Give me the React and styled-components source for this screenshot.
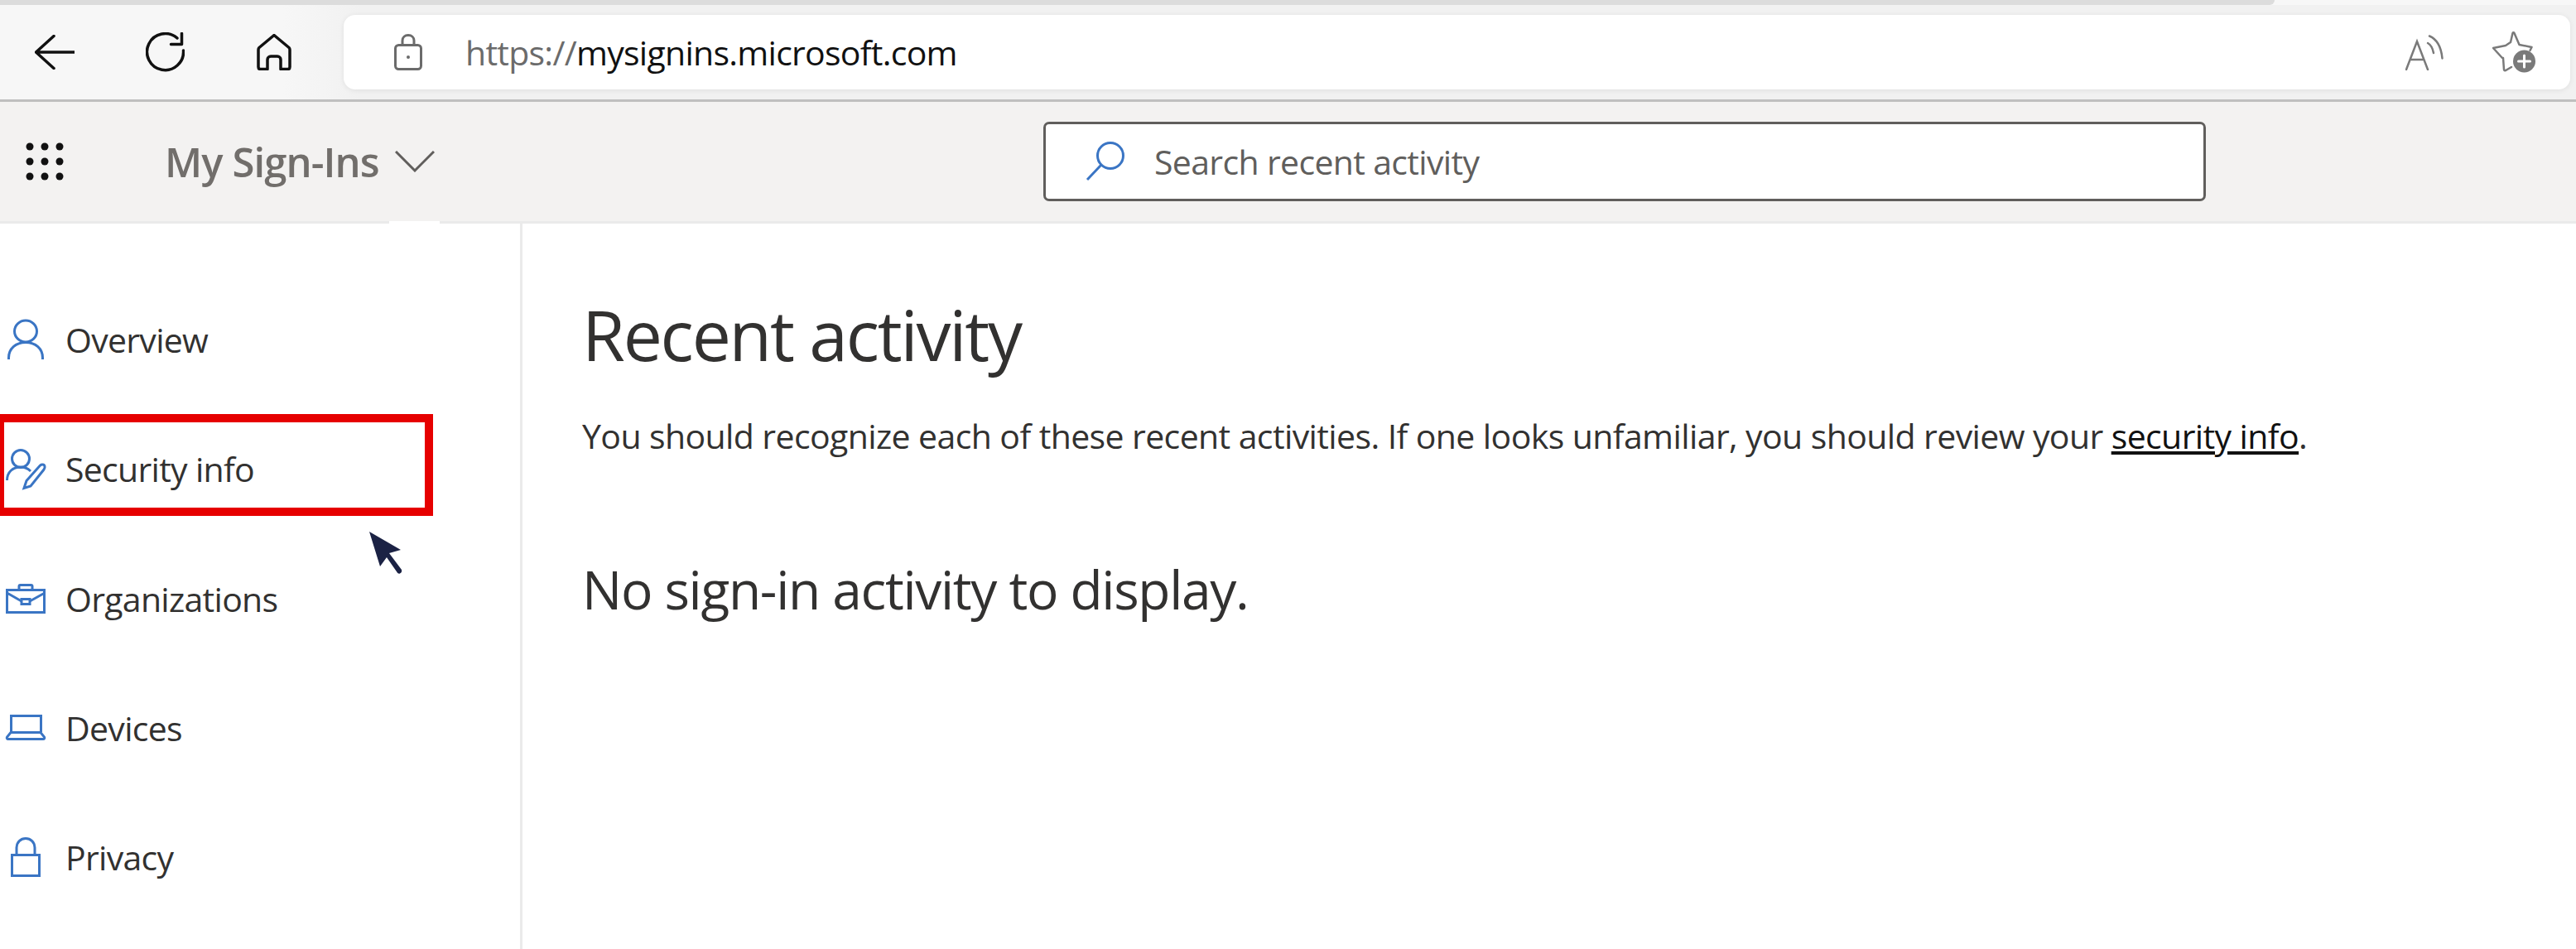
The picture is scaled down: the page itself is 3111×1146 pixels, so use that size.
import styled, { createGlobalStyle } from "styled-components";

const GlobalStyle = createGlobalStyle`
  html, body {
    margin: 0;
    padding: 0;
    background: #fff;
  }
  body {
    font-family: "Open Sans", "Noto Sans", "Liberation Sans", sans-serif;
    color: #323130;
  }
`;

const NAV_ITEMS = [
  { label: "Overview", icon: <PersonIcon /> },
  { label: "Security info", icon: <SecurityIcon /> },
  { label: "Organizations", icon: <BriefcaseIcon /> },
  { label: "Devices", icon: <LaptopIcon /> },
  { label: "Privacy", icon: <PadlockIcon /> },
];

function PersonIcon() {
  return (
    <NavSvg viewBox="0 0 48 48" width="48" height="48">
      <ellipse cx="24" cy="14" rx="13.500" ry="13" />
      <path d="M3.500 48v-2C3.500 35 12 27.500 24 27.500S44.500 35 44.500 46v2" />
    </NavSvg>
  );
}

function SecurityIcon() {
  return (
    <NavSvg viewBox="0 0 48 48" width="48" height="48">
      <circle cx="18" cy="12" r="10.500" />
      <path d="M1.500 38c0-10 7-16 16.500-16 4.500 0 8.500 1.500 12 5" />
      <path d="M25 38.500L41.500 20c1.500-1.500 5-1.500 5.500 1 .4 1.500 0 2.500-1 4L30 45l-8 2.500z" />
    </NavSvg>
  );
}

function BriefcaseIcon() {
  return (
    <NavSvg viewBox="0 0 48 36" width="48" height="36">
      <rect x="1.500" y="7.500" width="45" height="27" />
      <path d="M16 7V3c0-1 .8-1.500 1.500-1.500h13c.8 0 1.500.5 1.500 1.500v4" />
      <path d="M1.500 11L19 21M47 11L29 21" />
      <rect x="19" y="18.500" width="10" height="6" />
    </NavSvg>
  );
}

function LaptopIcon() {
  return (
    <NavSvg viewBox="0 0 48 31" width="48" height="31">
      <path d="M6.500 21V1.500h36V21" />
      <path d="M6 21.500h36l4.500 5.500c.7 1.200 0 2.500-1.500 2.500H3c-1.500 0-2.200-1.300-1.500-2.500z" />
    </NavSvg>
  );
}

function PadlockIcon() {
  return (
    <NavSvg viewBox="0 0 36 48" width="36" height="48">
      <rect x="1.500" y="21.500" width="33" height="25" />
      <path d="M7 21v-8.500C7 6 12 1.500 18 1.500S29 6 29 12.500V21" />
    </NavSvg>
  );
}

export default function App() {
  return (
    <Page>
      <GlobalStyle />
      <TabStrip>
        <TabEdge />
      </TabStrip>
      <Toolbar>
        <ToolButton $width={112}>
          <ToolSvg viewBox="0 0 48 42" width="48" height="42">
            <path d="M23 1.500L1.500 21 23 40.500M2 21h46" />
          </ToolSvg>
        </ToolButton>
        <ToolButton $width={154}>
          <ToolSvg viewBox="0 0 47 48" width="47" height="48">
            <path d="M38 7A22 22 0 1 0 45.500 22" />
            <path d="M43.500 1.500v13H30.500" />
          </ToolSvg>
        </ToolButton>
        <ToolButton $width={110}>
          <ToolSvg viewBox="0 0 42 44" width="42" height="44">
            <path d="M21 1.500L3 16.500Q2 17.500 2 19V40Q2 42.500 4.500 42.500H13V31a4 4 0 0 1 4-4h8a4 4 0 0 1 4 4V42.500h8.500Q40 42.500 40 40V19q0-1.500-1-2.500z" />
          </ToolSvg>
        </ToolButton>
        <AddressBar>
          <LockSlot>
            <svg viewBox="0 0 34 44" width="34" height="44" fill="none" stroke="#6b6b6b" strokeWidth="3">
              <rect x="1.500" y="13.500" width="31" height="29" rx="4" />
              <path d="M10 13V8c0-4 3-6.500 7-6.500s7 2.500 7 6.500v5" />
              <circle cx="17" cy="28" r="2" fill="#6b6b6b" stroke="none" />
            </svg>
          </LockSlot>
          <Url>
            <UrlScheme>https://</UrlScheme>mysignins.microsoft.com
          </Url>
          <AddressActions>
            <svg viewBox="0 0 46 43" width="46" height="43" fill="none" stroke="#7a7a7a" strokeWidth="2.500" strokeLinecap="round">
              <path d="M1 42L14 8l13 34M6 30h16" />
              <path d="M27 10c3.500 2 6 6.500 7 12" />
              <path d="M29 1.500c7 3 14 11 15.500 27" />
            </svg>
            <svg viewBox="0 0 52 50" width="52" height="50" fill="none" stroke="#7a7a7a" strokeWidth="2.500" strokeLinecap="round" strokeLinejoin="round">
              <path d="M22 13L24.500 2c.5-1 1.500-1 2 0l6 14 15 3-2 4M12 32l-11-12 15-3 6-4M13 32l1 14c.5 1.500 1.500 1.500 3 .5l6-3.500" />
              <circle cx="38.500" cy="36" r="13.500" fill="#7a7a7a" stroke="none" />
              <path d="M38.500 29v14M31.500 36h14" stroke="#fff" strokeWidth="3" />
            </svg>
          </AddressActions>
        </AddressBar>
      </Toolbar>

      <SuiteHeader>
        <WaffleSlot>
          <svg viewBox="0 0 46 46" width="46" height="46" fill="#111">
            {[5, 23, 41].map((cy) =>
              [5, 23, 41].map((cx) => <circle key={`${cx}-${cy}`} cx={cx} cy={cy} r="4.500" />)
            )}
          </svg>
        </WaffleSlot>
        <AppName>My Sign-Ins</AppName>
        <AppChevron viewBox="0 0 48 26" width="48" height="26">
          <path d="M1 1l23 23L47 1" />
        </AppChevron>
        <SearchBox>
          <svg viewBox="0 0 48 48" width="48" height="48" fill="none" stroke="#3a75c4" strokeWidth="3">
            <circle cx="30" cy="17" r="15.500" />
            <path d="M19 28L2 46" />
          </svg>
          <SearchText>Search recent activity</SearchText>
        </SearchBox>
        <HeaderNotch />
      </SuiteHeader>

      <Body>
        <Sidebar>
          {NAV_ITEMS.map((item) => (
            <NavRow key={item.label}>
              <NavIconSlot>{item.icon}</NavIconSlot>
              <NavLabel>{item.label}</NavLabel>
            </NavRow>
          ))}
          <Highlight />
          <Cursor viewBox="0 0 40 51" width="40" height="51">
            <path d="M0 0L38 22 24 26 39 46c.6 2-.2 3.500-2 4.500-1.500.5-2.600 0-3.500-1.500L21 31 13 42z" />
          </Cursor>
        </Sidebar>
        <Main>
          <Title>Recent activity</Title>
          <Intro>
            You should recognize each of these recent activities. If one looks unfamiliar, you
            should review your <IntroLink href="#">security info</IntroLink>.
          </Intro>
          <EmptyNote>No sign-in activity to display.</EmptyNote>
        </Main>
      </Body>
    </Page>
  );
}

const Page = styled.div`
  width: 3111px;
  height: 1146px;
  overflow: hidden;
  display: flex;
  flex-direction: column;
  background: #fff;
`;

const TabStrip = styled.div`
  height: 6px;
  background: #f7f7f7;
  flex: none;
`;

const TabEdge = styled.div`
  width: 2747px;
  height: 6px;
  background: #dcdcdc;
  border-bottom-right-radius: 6px;
`;

const Toolbar = styled.div`
  height: 114px;
  flex: none;
  display: flex;
  align-items: center;
  padding: 0 7px 0 10px;
  box-sizing: content-box;
  background: linear-gradient(90deg, #f7f7f7, #f7f7f7 11%, #f1f1f1 14%, #f1f1f1);
  border-bottom: 3px solid #bfbfbf;
  width: 3094px;
`;

const ToolButton = styled.div`
  width: ${(p) => p.$width}px;
  flex: none;
  display: flex;
  align-items: center;
  justify-content: center;
`;

const ToolSvg = styled.svg`
  fill: none;
  stroke: #111;
  stroke-width: 3.5;
  stroke-linecap: round;
  stroke-linejoin: round;
`;

const AddressBar = styled.div`
  flex: 1;
  height: 90px;
  margin: 0 0 0 29px;
  display: flex;
  align-items: center;
  background: #fff;
  border-radius: 14px;
  box-shadow: 0 1px 6px rgba(0, 0, 0, 0.08);
`;

const LockSlot = styled.div`
  width: 147px;
  padding-left: 61px;
  box-sizing: border-box;
  display: flex;
  flex: none;
`;

const Url = styled.span`
  font-size: 41px;
  color: #111;
  letter-spacing: -0.73px;
  white-space: nowrap;
`;

const UrlScheme = styled.span`
  color: #6b6b6b;
`;

const AddressActions = styled.div`
  margin-left: auto;
  padding-right: 42px;
  display: flex;
  align-items: center;
  gap: 59px;
`;

const SuiteHeader = styled.header`
  position: relative;
  height: 144px;
  flex: none;
  display: flex;
  align-items: center;
  background: #f3f2f1;
  border-bottom: 3px solid #eaeaea;
`;

const WaffleSlot = styled.div`
  width: 199px;
  padding-left: 31px;
  box-sizing: border-box;
  display: flex;
  flex: none;
`;

const AppName = styled.span`
  font-size: 49px;
  font-weight: 600;
  color: #716e6b;
  letter-spacing: -0.9px;
  white-space: nowrap;
`;

const AppChevron = styled.svg`
  margin-left: 19px;
  fill: none;
  stroke: #605e5c;
  stroke-width: 3;
`;

const SearchBox = styled.div`
  position: absolute;
  left: 1260px;
  top: 24px;
  width: 1404px;
  height: 96px;
  box-sizing: border-box;
  padding-left: 48px;
  display: flex;
  align-items: center;
  gap: 35px;
  background: #fff;
  border: 3px solid #605e5c;
  border-radius: 7px;
`;

const SearchText = styled.span`
  font-size: 41px;
  color: #605e5c;
  letter-spacing: -0.65px;
`;

const HeaderNotch = styled.div`
  position: absolute;
  left: 470px;
  bottom: -3px;
  width: 61px;
  height: 3px;
  background: #fff;
`;

const Body = styled.div`
  flex: 1;
  display: flex;
  min-height: 0;
`;

const Sidebar = styled.nav`
  position: relative;
  width: 628px;
  flex: none;
  box-sizing: content-box;
  padding-top: 62px;
  border-right: 3px solid #eaeaea;
`;

const NavRow = styled.div`
  height: 156.25px;
  display: flex;
  align-items: center;
`;

const NavIconSlot = styled.div`
  width: 62px;
  flex: none;
  display: flex;
  justify-content: center;
`;

const NavSvg = styled.svg`
  fill: none;
  stroke: #3a75c4;
  stroke-width: 3;
  overflow: visible;
`;

const NavLabel = styled.span`
  margin-left: 17px;
  font-size: 41px;
  color: #323130;
  letter-spacing: -0.7px;
  white-space: nowrap;
`;

const Highlight = styled.div`
  position: absolute;
  left: 0;
  top: 230px;
  width: 523px;
  height: 123px;
  box-sizing: border-box;
  border: 10px solid #e60000;
  border-left-width: 5px;
  pointer-events: none;
`;

const Cursor = styled.svg`
  position: absolute;
  left: 446px;
  top: 372px;
  fill: #1b2244;
`;

const Main = styled.main`
  flex: 1;
  padding: 78px 0 0 703px;
  margin-left: -631px;
  min-width: 0;
`;

const Title = styled.h1`
  margin: 0;
  font-size: 84px;
  line-height: 112px;
  font-weight: 400;
  color: #323130;
  letter-spacing: -2.2px;
`;

const Intro = styled.p`
  margin: 38px 0 0;
  font-size: 41px;
  line-height: 56px;
  color: #323130;
  letter-spacing: -0.6px;
  white-space: nowrap;
`;

const IntroLink = styled.a`
  color: #111;
  text-decoration: underline;
`;

const EmptyNote = styled.p`
  margin: 116px 0 0;
  font-size: 64px;
  line-height: 84px;
  color: #323130;
  letter-spacing: -1.3px;
  white-space: nowrap;
`;
